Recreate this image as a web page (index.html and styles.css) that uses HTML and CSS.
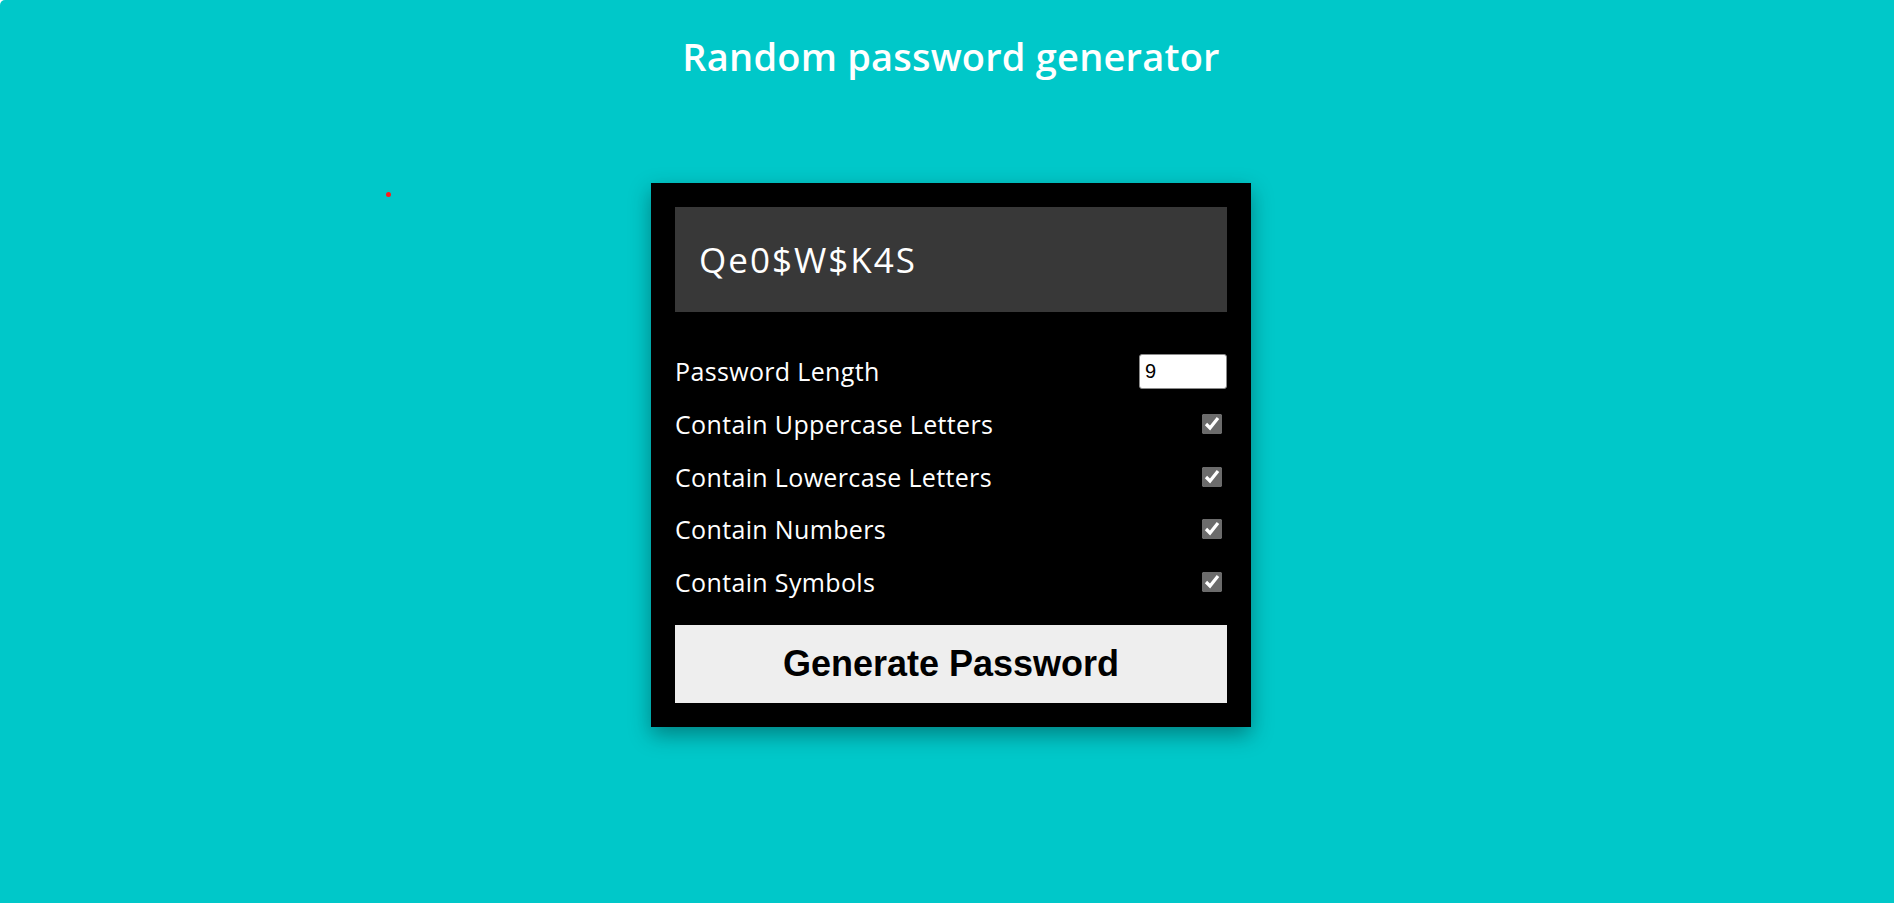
FILE: index.html
```html
<!DOCTYPE html>
<html lang="en">
<head>
<meta charset="utf-8">
<title>Random password generator</title>
<link rel="stylesheet" href="styles.css">
</head>
<body>
<span class="dot"></span>
<h1 class="title">Random password generator</h1>
<main class="stage">
  <section class="card">
    <div class="result">Qe0$W$K4S</div>
    <div class="settings">
      <div class="row">
        <label class="label" for="len">Password Length</label>
        <input class="length" id="len" type="number" value="9">
      </div>
      <div class="row">
        <label class="label" for="up">Contain Uppercase Letters</label>
        <input class="check" id="up" type="checkbox" checked>
      </div>
      <div class="row">
        <label class="label" for="low">Contain Lowercase Letters</label>
        <input class="check" id="low" type="checkbox" checked>
      </div>
      <div class="row">
        <label class="label" for="num">Contain Numbers</label>
        <input class="check" id="num" type="checkbox" checked>
      </div>
      <div class="row">
        <label class="label" for="sym">Contain Symbols</label>
        <input class="check" id="sym" type="checkbox" checked>
      </div>
    </div>
    <button class="generate" type="button">Generate Password</button>
  </section>
</main>
</body>
</html>
```
FILE: styles.css
```css
html {
  background: #ffffff;
}
body {
  margin: 0;
  padding-left: 8px;
  min-height: 100vh;
  background: #00c8c9;
  border-top-left-radius: 5px;
  font-family: "Open Sans", "Noto Sans", sans-serif;
  color: #ffffff;
  overflow: hidden;
}
.dot {
  position: absolute;
  left: 386px;
  top: 192px;
  width: 5px;
  height: 5px;
  border-radius: 50%;
  background: #ff1a1a;
}
.title {
  margin: 0;
  padding-top: 37px;
  font-size: 38px;
  line-height: 38px;
  font-weight: 600;
  letter-spacing: 0.2px;
  text-align: center;
}
.stage {
  display: flex;
  justify-content: center;
  padding-top: 108px;
}
.card {
  width: 600px;
  box-sizing: border-box;
  padding: 24px;
  background: #000000;
  box-shadow: 0 8px 20px rgba(0, 0, 0, 0.35);
}
.result {
  height: 105px;
  box-sizing: border-box;
  padding: 0 24px;
  display: flex;
  align-items: center;
  background: #383838;
  font-size: 35px;
  letter-spacing: 2px;
}
.settings {
  margin-top: 33px;
  display: flex;
  flex-direction: column;
}
.row {
  height: 52.7px;
  display: flex;
  align-items: center;
  justify-content: space-between;
}
.label {
  font-size: 25px;
  letter-spacing: 0.35px;
}
.length {
  width: 88px;
  height: 35px;
  box-sizing: border-box;
  margin: 0;
  padding: 0 5px;
  border: 1px solid #8a8a8a;
  border-radius: 3px;
  background: #ffffff;
  color: #000000;
  font-family: "Liberation Sans", Arial, sans-serif;
  font-size: 20px;
}
.check {
  width: 20px;
  height: 20px;
  margin: 0 5px 0 0;
  accent-color: #6b6b6b;
}
.generate {
  display: block;
  width: 100%;
  height: 78px;
  margin-top: 16.5px;
  border: none;
  background: #eeeeee;
  color: #000000;
  font-family: "Liberation Sans", Arial, sans-serif;
  font-size: 36px;
  font-weight: 700;
}
```
